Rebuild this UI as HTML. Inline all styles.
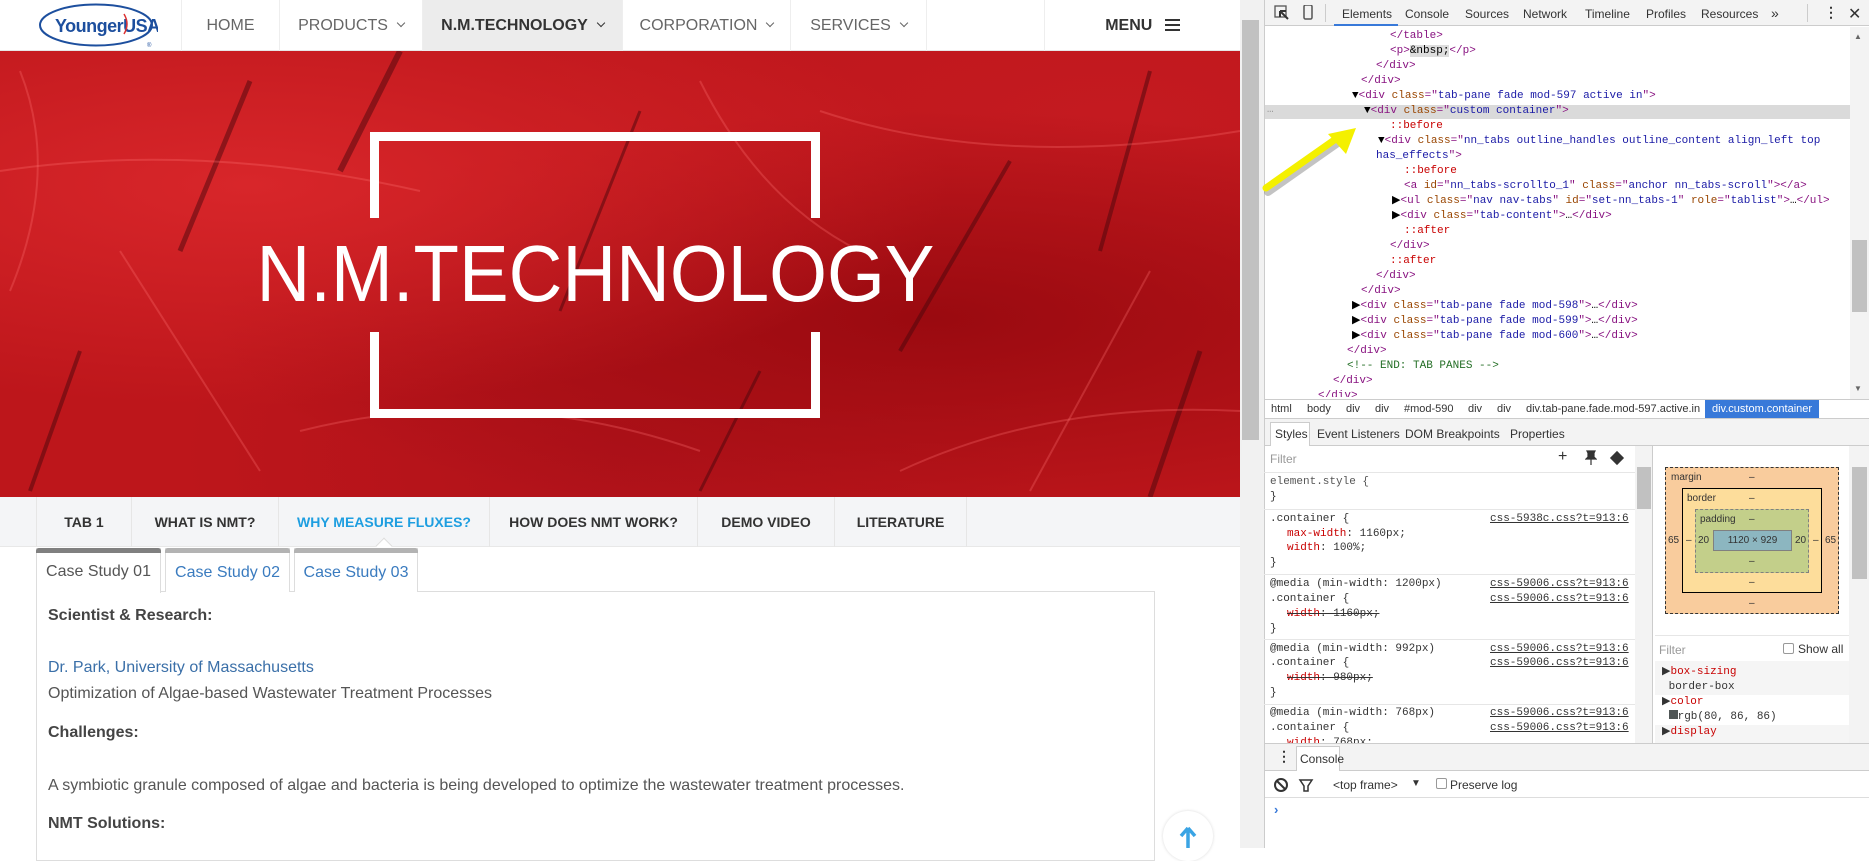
<!DOCTYPE html>
<html><head><meta charset="utf-8">
<style>
*{margin:0;padding:0;box-sizing:border-box}
body{width:1869px;height:848px;overflow:hidden;position:relative;background:#fff;font-family:"Liberation Sans",sans-serif}
.a{position:absolute}
.nav{left:0;top:0;width:1240px;height:51px;background:#fff;border-bottom:1px solid #e6e6e6}
.ni{position:absolute;top:0;height:51px;line-height:51px;font-size:16px;color:#666;text-align:center;border-left:1px solid #eee}
.chev{display:inline-block;width:6px;height:6px;border-right:1.5px solid #666;border-bottom:1.5px solid #666;transform:rotate(45deg);margin-left:10px;position:relative;top:-4px}
.hero{left:0;top:51px;width:1240px;height:446px;overflow:hidden;
background:
radial-gradient(ellipse at 20% 30%,#d8262a,transparent 50%),
radial-gradient(ellipse at 75% 60%,#9a0a10,transparent 55%),
radial-gradient(ellipse at 50% 90%,#b0121a,transparent 50%),
radial-gradient(ellipse at 90% 15%,#c41a20,transparent 40%),
#bd161b}
.w{background:#fff;position:absolute}
.tabbar{left:0;top:497px;width:1240px;height:50px;background:#f4f5f7;border-bottom:1px solid #e8e8e8}
.tb{position:absolute;top:0;height:50px;line-height:50px;font-size:14px;font-weight:bold;color:#333;text-align:center;border-left:1px solid #e6e6e6}
.cs{position:absolute;top:548px;height:44px;border:1px solid #ddd;border-bottom:none;font-size:16px;line-height:48px;text-align:center;color:#3a7bbf;background:#fff}
.cs:before{content:"";position:absolute;left:-1px;right:-1px;top:-1px;height:5px;background:#b3b3b3;border-radius:3px 3px 0 0}
.box{left:36px;top:591px;width:1119px;height:270px;border:1px solid #ddd}
.t{position:absolute;left:48px;font-size:16px;color:#555}
.b{font-weight:bold;color:#444}
.dt{left:1264px;top:0;width:605px;height:848px;background:#fff;border-left:1px solid #ccc}
.mono{font-family:"Liberation Mono",monospace;font-size:11px;white-space:pre}
.el{position:absolute;height:15px;line-height:15px}
.tg{color:#881280}.at{color:#994500}.av{color:#1a1aa6}.ps{color:#c80000}.cm{color:#236e25}
.ui{font-family:"Liberation Sans",sans-serif;font-size:12px;color:#333}
.sl{position:absolute;left:1270px;height:15px;line-height:15px}
.lk{position:absolute;left:1490px;color:#333;text-decoration:underline;height:15px;line-height:15px}
.sep{position:absolute;left:1264px;width:371px;height:1px;background:#e6e6e6}
</style></head><body>

<div class="a nav">
 <svg class="a" style="left:38px;top:2px" width="120" height="48" viewBox="0 0 120 48">
  <ellipse cx="58" cy="23" rx="56" ry="20.5" fill="#fff" stroke="#1d4f9e" stroke-width="2"/>
  <text x="17" y="30" font-family="Liberation Sans" font-weight="bold" font-size="18" fill="#1d4f9e" letter-spacing="-0.5">YoungerUSA</text>
  <path d="M86 12 Q92 22 86 32" stroke="#d33" stroke-width="1.5" fill="none"/>
  <text x="109" y="45" font-size="6" fill="#1d4f9e">®</text>
 </svg>
 <div class="ni" style="left:181px;width:98px">HOME</div>
 <div class="ni" style="left:279px;width:143px">PRODUCTS<span class="chev"></span></div>
 <div class="ni" style="left:422px;width:200px;background:#ececec;color:#333;font-weight:bold">N.M.TECHNOLOGY<span class="chev" style="border-color:#333"></span></div>
 <div class="ni" style="left:622px;width:168px">CORPORATION<span class="chev"></span></div>
 <div class="ni" style="left:790px;width:136px">SERVICES<span class="chev"></span></div>
 <div class="ni" style="left:926px;width:118px"></div>
 <div class="ni" style="left:1044px;width:196px;color:#333;font-weight:bold">MENU <span style="display:inline-block;width:15px;height:12px;border-top:2px solid #333;border-bottom:2px solid #333;position:relative;top:1px;margin-left:8px"><span style="position:absolute;left:0;right:0;top:3px;height:2px;background:#333"></span></span></div>
</div>

<div class="a hero">
 <svg class="a" style="left:0;top:0" width="1240" height="446">
  <g stroke="#4a060c" stroke-opacity=".5" fill="none">
   <path d="M1010 110 L900 300" stroke-width="4"/>
   <path d="M640 60 L560 260" stroke-width="3"/>
   <path d="M250 30 L180 200" stroke-width="5"/>
   <path d="M1150 20 L1100 200" stroke-width="4"/>
   <path d="M80 300 L30 440" stroke-width="4"/>
   <path d="M760 320 L700 440" stroke-width="3"/>
   <path d="M400 0 L340 120" stroke-width="6"/>
   <path d="M1200 300 L1150 446" stroke-width="5"/>
  </g>
  <g stroke="#ff7070" stroke-opacity=".3" fill="none" stroke-width="2">
   <path d="M0 120 Q200 90 420 140"/><path d="M820 60 Q1000 120 1240 80"/>
   <path d="M300 380 Q500 330 700 400"/><path d="M900 420 Q1050 350 1240 360"/>
   <path d="M120 200 L260 420"/><path d="M1150 220 L1030 440"/>
   <path d="M20 20 Q60 120 10 240"/><path d="M700 30 Q760 150 860 200"/>
  </g>
 </svg>
 <div class="w" style="left:370px;top:81px;width:450px;height:9px"></div>
 <div class="w" style="left:370px;top:81px;width:9px;height:86px"></div>
 <div class="w" style="left:811px;top:81px;width:9px;height:86px"></div>
 <div class="w" style="left:370px;top:358px;width:450px;height:9px"></div>
 <div class="w" style="left:370px;top:281px;width:9px;height:86px"></div>
 <div class="w" style="left:811px;top:281px;width:9px;height:86px"></div>
 <div class="a" style="left:95px;top:178px;width:1000px;text-align:center;color:#fff;font-size:80px;line-height:90px;white-space:nowrap"><span style="display:inline-block;transform:scaleX(0.93);transform-origin:center">N.M.TECHNOLOGY</span></div>
</div>

<div class="a" style="left:1240px;top:0;width:24px;height:848px;background:#f1f1f1"></div>
<div class="a" style="left:1242px;top:20px;width:17px;height:420px;background:#c1c1c1"></div>

<div class="a tabbar">
 <div class="tb" style="left:36px;width:95px">TAB 1</div>
 <div class="tb" style="left:131px;width:147px">WHAT IS NMT?</div>
 <div class="tb" style="left:278px;width:211px;color:#1e9ee0">WHY MEASURE FLUXES?</div>
 <div class="tb" style="left:489px;width:208px">HOW DOES NMT WORK?</div>
 <div class="tb" style="left:697px;width:137px">DEMO VIDEO</div>
 <div class="tb" style="left:834px;width:132px">LITERATURE</div>
 <div class="tb" style="left:966px;width:1px"></div>
</div>
<div class="a" style="left:378px;top:540px;width:12px;height:12px;background:#fff;border-left:1px solid #ddd;border-top:1px solid #ddd;transform:rotate(45deg)"></div>

<div class="a box"></div>
<div class="cs" style="left:36px;width:125px;height:45px"></div>
<div class="cs" style="left:165px;width:125px">Case Study 02</div>
<div class="cs" style="left:294px;width:124px">Case Study 03</div>
<div class="a" style="left:36px;top:548px;width:125px;height:5px;background:#808080;border-radius:3px 3px 0 0"></div>
<div class="a" style="left:36px;top:548px;width:125px;line-height:48px;font-size:16px;color:#555;text-align:center">Case Study 01</div>

<div class="t b" style="top:607px">Scientist &amp; Research:</div>
<div class="t" style="top:659px;color:#3a6fa8">Dr. Park, University of Massachusetts</div>
<div class="t" style="top:685px">Optimization of Algae-based Wastewater Treatment Processes</div>
<div class="t b" style="top:724px">Challenges:</div>
<div class="t" style="top:777px">A symbiotic granule composed of algae and bacteria is being developed to optimize the wastewater treatment processes.</div>
<div class="t b" style="top:815px">NMT Solutions:</div>

<div class="a" style="left:1163px;top:811px;width:50px;height:50px;border-radius:50%;background:#fff;box-shadow:0 0 3px rgba(0,0,0,.15)"></div>
<svg class="a" style="left:1178px;top:826px" width="20" height="22"><path d="M10 2 L3 10 M10 2 L17 10 M10 2 V22" stroke="#3aa4e4" stroke-width="3.5" fill="none"/></svg>

<div class="a dt"></div>
<div class="a" style="left:1265px;top:0;width:604px;height:26px;background:#f3f3f3;border-bottom:1px solid #ccc"></div>
<svg class="a" style="left:1274px;top:5px" width="40" height="16"><rect x="1" y="1" width="11" height="11" fill="none" stroke="#555" stroke-width="1.3"/><path d="M6 6 L14 14 M6 6 L6 12 M6 6 L12 6" stroke="#333" stroke-width="2"/><rect x="30" y="0" width="8" height="14" rx="1.5" fill="none" stroke="#555" stroke-width="1.5"/></svg>
<div class="a" style="left:1325px;top:4px;width:1px;height:18px;background:#ccc"></div>
<div class="a ui" style="top:7px;left:1342px">Elements</div>
<div class="a" style="left:1334px;top:24px;width:64px;height:2px;background:#3879d9"></div>
<div class="a ui" style="top:7px;left:1405px">Console</div>
<div class="a ui" style="top:7px;left:1465px">Sources</div>
<div class="a ui" style="top:7px;left:1523px">Network</div>
<div class="a ui" style="top:7px;left:1585px">Timeline</div>
<div class="a ui" style="top:7px;left:1646px">Profiles</div>
<div class="a ui" style="top:7px;left:1701px">Resources</div>
<div class="a ui" style="top:5px;left:1771px;font-size:14px">»</div>
<div class="a" style="left:1807px;top:4px;width:1px;height:18px;background:#ccc"></div>
<div class="a ui" style="top:4px;left:1824px;font-size:14px;font-weight:bold">⋮</div>
<div class="a ui" style="top:4px;left:1848px;font-size:16px">✕</div>

<div class="a" style="left:1265px;top:105px;width:585px;height:14px;background:#dadada"></div>
<div class="a mono" style="left:1267px;top:104px;color:#999">…</div>
<div class="a mono" style="left:1264px;top:0;font-size:11px">
<div class="el" style="left:126px;top:29px"><span class="tg">&lt;/table&gt;</span></div>
<div class="el" style="left:126px;top:44px"><span class="tg">&lt;p&gt;</span><span style="background:#ddd">&amp;nbsp;</span><span class="tg">&lt;/p&gt;</span></div>
<div class="el" style="left:112px;top:59px"><span class="tg">&lt;/div&gt;</span></div>
<div class="el" style="left:97px;top:74px"><span class="tg">&lt;/div&gt;</span></div>
<div class="el" style="left:88px;top:89px">▼<span class="tg">&lt;div </span><span class="at">class</span><span class="tg">="</span><span class="av">tab-pane fade mod-597 active in</span><span class="tg">"&gt;</span></div>
<div class="el" style="left:100px;top:104px">▼<span class="tg">&lt;div </span><span class="at">class</span><span class="tg">="</span><span class="av">custom container</span><span class="tg">"&gt;</span></div>
<div class="el ps" style="left:126px;top:119px">::before</div>
<div class="el" style="left:114px;top:134px">▼<span class="tg">&lt;div </span><span class="at">class</span><span class="tg">="</span><span class="av">nn_tabs outline_handles outline_content align_left top</span></div>
<div class="el" style="left:112px;top:149px"><span class="av">has_effects</span><span class="tg">"&gt;</span></div>
<div class="el ps" style="left:140px;top:164px">::before</div>
<div class="el" style="left:140px;top:179px"><span class="tg">&lt;a </span><span class="at">id</span><span class="tg">="</span><span class="av">nn_tabs-scrollto_1</span><span class="tg">" </span><span class="at">class</span><span class="tg">="</span><span class="av">anchor nn_tabs-scroll</span><span class="tg">"&gt;&lt;/a&gt;</span></div>
<div class="el" style="left:128px;top:194px">▶<span class="tg">&lt;ul </span><span class="at">class</span><span class="tg">="</span><span class="av">nav nav-tabs</span><span class="tg">" </span><span class="at">id</span><span class="tg">="</span><span class="av">set-nn_tabs-1</span><span class="tg">" </span><span class="at">role</span><span class="tg">="</span><span class="av">tablist</span><span class="tg">"&gt;</span>…<span class="tg">&lt;/ul&gt;</span></div>
<div class="el" style="left:128px;top:209px">▶<span class="tg">&lt;div </span><span class="at">class</span><span class="tg">="</span><span class="av">tab-content</span><span class="tg">"&gt;</span>…<span class="tg">&lt;/div&gt;</span></div>
<div class="el ps" style="left:140px;top:224px">::after</div>
<div class="el" style="left:126px;top:239px"><span class="tg">&lt;/div&gt;</span></div>
<div class="el ps" style="left:126px;top:254px">::after</div>
<div class="el" style="left:112px;top:269px"><span class="tg">&lt;/div&gt;</span></div>
<div class="el" style="left:97px;top:284px"><span class="tg">&lt;/div&gt;</span></div>
<div class="el" style="left:88px;top:299px">▶<span class="tg">&lt;div </span><span class="at">class</span><span class="tg">="</span><span class="av">tab-pane fade mod-598</span><span class="tg">"&gt;</span>…<span class="tg">&lt;/div&gt;</span></div>
<div class="el" style="left:88px;top:314px">▶<span class="tg">&lt;div </span><span class="at">class</span><span class="tg">="</span><span class="av">tab-pane fade mod-599</span><span class="tg">"&gt;</span>…<span class="tg">&lt;/div&gt;</span></div>
<div class="el" style="left:88px;top:329px">▶<span class="tg">&lt;div </span><span class="at">class</span><span class="tg">="</span><span class="av">tab-pane fade mod-600</span><span class="tg">"&gt;</span>…<span class="tg">&lt;/div&gt;</span></div>
<div class="el" style="left:83px;top:344px"><span class="tg">&lt;/div&gt;</span></div>
<div class="el cm" style="left:83px;top:359px">&lt;!-- END: TAB PANES --&gt;</div>
<div class="el" style="left:69px;top:374px"><span class="tg">&lt;/div&gt;</span></div>
<div class="el" style="left:54px;top:389px;height:8px;overflow:hidden"><span class="tg">&lt;/div&gt;</span></div>
</div>
<svg class="a" style="left:1262px;top:126px" width="100" height="72"><path d="M6 66 L80 14" stroke="#888" stroke-opacity=".5" stroke-width="8" stroke-linecap="round"/><path d="M4 62 L78 10" stroke="#f4f000" stroke-width="7" stroke-linecap="round"/><path d="M94 2 L66 8 L84 28 Z" fill="#f4f000"/></svg>
<div class="a" style="left:1850px;top:27px;width:19px;height:372px;background:#f3f3f3"></div>
<div class="a" style="left:1852px;top:240px;width:15px;height:72px;background:#c1c1c1"></div>
<div class="a" style="left:1854px;top:32px;font-size:8px;color:#666">▲</div>
<div class="a" style="left:1854px;top:384px;font-size:8px;color:#666">▼</div>

<div class="a" style="left:1265px;top:399px;width:604px;height:20px;background:#fff;border-top:1px solid #ccc;border-bottom:1px solid #ccc"></div>
<div class="a ui" style="left:1271px;top:403px;font-size:11px">html</div>
<div class="a ui" style="left:1307px;top:403px;font-size:11px">body</div>
<div class="a ui" style="left:1346px;top:403px;font-size:11px">div</div>
<div class="a ui" style="left:1375px;top:403px;font-size:11px">div</div>
<div class="a ui" style="left:1404px;top:403px;font-size:11px">#mod-590</div>
<div class="a ui" style="left:1468px;top:403px;font-size:11px">div</div>
<div class="a ui" style="left:1497px;top:403px;font-size:11px">div</div>
<div class="a ui" style="left:1526px;top:403px;font-size:11px">div.tab-pane.fade.mod-597.active.in</div>
<div class="a" style="left:1705px;top:400px;width:114px;height:18px;background:#3879d9"></div>
<div class="a ui" style="left:1712px;top:403px;font-size:11px;color:#fff">div.custom.container</div>

<div class="a" style="left:1265px;top:419px;width:604px;height:27px;background:#f3f3f3;border-bottom:1px solid #ccc"></div>
<div class="a" style="left:1270px;top:422px;width:40px;height:24px;background:#fff;border:1px solid #ccc;border-bottom:none"></div>
<div class="a ui" style="left:1275px;top:427px">Styles</div>
<div class="a ui" style="left:1317px;top:427px">Event Listeners</div>
<div class="a ui" style="left:1405px;top:427px">DOM Breakpoints</div>
<div class="a ui" style="left:1510px;top:427px">Properties</div>

<div class="a ui" style="left:1270px;top:452px;color:#999">Filter</div>
<div class="a ui" style="left:1558px;top:448px;font-size:16px">+</div>
<svg class="a" style="left:1585px;top:450px" width="12" height="16"><path d="M2 1 H10 L9 3 V7 L11 9 H1 L3 7 V3 Z M6 9 V15" fill="#333" stroke="#333" stroke-width="1.2"/></svg>
<div class="a" style="left:1612px;top:453px;width:10px;height:10px;background:#333;transform:rotate(45deg)"></div>
<div class="sep" style="top:472px"></div>
<div class="mono" style="color:#333">
<div class="sl" style="top:475px;color:#555">element.style {</div>
<div class="sl" style="top:490px">}</div>
<div class="sep" style="top:509px"></div>
<div class="sl" style="top:512px">.container {</div>
<div class="lk" style="top:512px">css-5938c.css?t=913:6</div>
<div class="sl" style="top:527px;left:1287px"><span class="ps">max-width</span>: 1160px;</div>
<div class="sl" style="top:541px;left:1287px"><span class="ps">width</span>: 100%;</div>
<div class="sl" style="top:556px">}</div>
<div class="sep" style="top:574px"></div>
<div class="sl" style="top:577px">@media (min-width: 1200px)</div>
<div class="lk" style="top:577px">css-59006.css?t=913:6</div>
<div class="sl" style="top:592px">.container {</div>
<div class="lk" style="top:592px">css-59006.css?t=913:6</div>
<div class="sl" style="top:607px;left:1287px;text-decoration:line-through"><span class="ps">width</span>: 1160px;</div>
<div class="sl" style="top:622px">}</div>
<div class="sep" style="top:639px"></div>
<div class="sl" style="top:642px">@media (min-width: 992px)</div>
<div class="lk" style="top:642px">css-59006.css?t=913:6</div>
<div class="sl" style="top:656px">.container {</div>
<div class="lk" style="top:656px">css-59006.css?t=913:6</div>
<div class="sl" style="top:671px;left:1287px;text-decoration:line-through"><span class="ps">width</span>: 980px;</div>
<div class="sl" style="top:686px">}</div>
<div class="sep" style="top:704px"></div>
<div class="sl" style="top:706px">@media (min-width: 768px)</div>
<div class="lk" style="top:706px">css-59006.css?t=913:6</div>
<div class="sl" style="top:721px">.container {</div>
<div class="lk" style="top:721px">css-59006.css?t=913:6</div>
<div class="sl" style="top:736px;left:1287px;height:7px;overflow:hidden"><span class="ps">width</span>: 768px;</div>
</div>
<div class="a" style="left:1635px;top:446px;width:18px;height:297px;background:#f3f3f3;border-right:1px solid #ccc"></div>
<div class="a" style="left:1637px;top:467px;width:14px;height:42px;background:#c1c1c1"></div>

<div class="a" style="left:1665px;top:467px;width:174px;height:147px;background:#f9cc9d;border:1px dashed #333"></div>
<div class="a" style="left:1682px;top:488px;width:140px;height:105px;background:#fddd9b;border:1.5px solid #000"></div>
<div class="a" style="left:1695px;top:509px;width:114px;height:64px;background:#c3cf8a;border:1px dashed #808080"></div>
<div class="a" style="left:1713px;top:530px;width:79px;height:21px;background:#8cb6c0;border:1px solid #808080;font-size:10px;line-height:19px;text-align:center;color:#333">1120 × 929</div>
<div class="a ui" style="font-size:10px;left:1671px;top:472px">margin</div>
<div class="a ui" style="font-size:10px;left:1687px;top:493px">border</div>
<div class="a ui" style="font-size:10px;left:1700px;top:514px">padding</div>
<div class="a ui" style="font-size:10px;left:1749px;top:472px">–</div>
<div class="a ui" style="font-size:10px;left:1749px;top:493px">–</div>
<div class="a ui" style="font-size:10px;left:1749px;top:514px">–</div>
<div class="a ui" style="font-size:10px;left:1749px;top:556px">–</div>
<div class="a ui" style="font-size:10px;left:1749px;top:577px">–</div>
<div class="a ui" style="font-size:10px;left:1749px;top:598px">–</div>
<div class="a ui" style="font-size:10px;left:1668px;top:535px">65</div>
<div class="a ui" style="font-size:10px;left:1686px;top:535px">–</div>
<div class="a ui" style="font-size:10px;left:1698px;top:535px">20</div>
<div class="a ui" style="font-size:10px;left:1795px;top:535px">20</div>
<div class="a ui" style="font-size:10px;left:1813px;top:535px">–</div>
<div class="a ui" style="font-size:10px;left:1825px;top:535px">65</div>
<div class="a" style="left:1655px;top:635px;width:194px;height:1px;background:#e6e6e6"></div>
<div class="a ui" style="left:1659px;top:643px;color:#999">Filter</div>
<div class="a" style="left:1783px;top:643px;width:11px;height:11px;border:1px solid #999;border-radius:2px"></div>
<div class="a ui" style="left:1798px;top:642px">Show all</div>
<div class="a" style="left:1655px;top:661px;width:194px;height:34px;background:#f5f5f5"></div>
<div class="a mono" style="left:1662px;top:665px;color:#333;line-height:15px">▶<span class="ps">box-sizing</span>
 border-box</div>
<div class="a mono" style="left:1662px;top:695px;color:#333;line-height:15px">▶<span class="ps">color</span>
 <span style="display:inline-block;width:9px;height:9px;background:#505656"></span>rgb(80, 86, 86)</div>
<div class="a" style="left:1655px;top:725px;width:194px;height:18px;background:#f5f5f5"></div>
<div class="a mono" style="left:1662px;top:725px;color:#333;line-height:15px">▶<span class="ps">display</span></div>
<div class="a" style="left:1849px;top:446px;width:20px;height:297px;background:#f3f3f3"></div>
<div class="a" style="left:1852px;top:467px;width:15px;height:112px;background:#c1c1c1"></div>

<div class="a" style="left:1265px;top:743px;width:604px;height:28px;background:#f3f3f3;border-top:1px solid #ccc;border-bottom:1px solid #ccc"></div>
<div class="a ui" style="left:1277px;top:748px;font-weight:bold;font-size:14px">⋮</div>
<div class="a" style="left:1296px;top:746px;width:44px;height:25px;background:#fff;border:1px solid #ccc;border-bottom:none"></div>
<div class="a ui" style="left:1300px;top:752px">Console</div>
<div class="a" style="left:1265px;top:797px;width:604px;height:1px;background:#ddd"></div>
<svg class="a" style="left:1274px;top:777px" width="60" height="16"><circle cx="7" cy="8" r="6" fill="none" stroke="#333" stroke-width="2"/><path d="M3 4 L11 12" stroke="#333" stroke-width="2"/><path d="M26 3 H38 L34 9 V14 H30 V9 Z" fill="none" stroke="#333" stroke-width="1.5"/></svg>
<div class="a ui" style="left:1333px;top:778px">&lt;top frame&gt;</div>
<div class="a ui" style="left:1411px;top:778px;font-size:10px">▼</div>
<div class="a" style="left:1436px;top:778px;width:11px;height:11px;border:1px solid #999;border-radius:2px"></div>
<div class="a ui" style="left:1450px;top:778px">Preserve log</div>
<div class="a" style="left:1274px;top:802px;color:#3879d9;font-size:13px;font-weight:bold">›</div>
</body></html>
